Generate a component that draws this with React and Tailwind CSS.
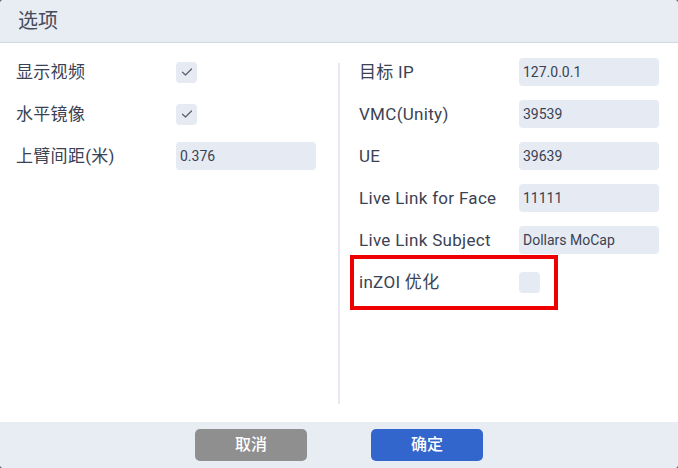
import React from "react";

const font = { fontFamily: 'Roboto, "Noto Sans CJK SC", sans-serif' };

function Check({ checked }) {
  return (
    <div className="w-[21px] h-[21px] rounded-[4px] bg-[#e6ebf3] flex items-center justify-center">
      {checked && (
        <svg width="12" height="10" viewBox="0 0 12 10" fill="none">
          <polyline points="1.5,5.2 4.5,8 10.5,2" stroke="#5b6272" strokeWidth="1.3" strokeLinecap="round" strokeLinejoin="round" />
        </svg>
      )}
    </div>
  );
}

function Input({ value }) {
  return (
    <div className="w-[140px] h-[28px] rounded-[4px] bg-[#e6ebf3] flex items-center pl-[4px] text-[14px] text-[#3a4252]">
      {value}
    </div>
  );
}

function Row({ label, children }) {
  return (
    <div className="h-[42px] flex items-center">
      <div className="w-[160px] pt-[2px] text-[17px] tracking-[0.3px] text-[#3a4253] whitespace-nowrap">{label}</div>
      {children}
    </div>
  );
}

export default function App() {
  return (
    <div className="w-[678px] h-[468px] bg-[#6b6b6b]" style={font}>
      <div className="w-full h-full rounded-[4px] bg-white flex flex-col overflow-hidden">
        <div className="h-[43px] shrink-0 bg-[#e8edf4] border-b border-[#cfd8e3] flex items-center pl-[18px] text-[20px] text-[#454c5a]">
          选项
        </div>
        <div className="flex-1 flex">
          <div className="w-[338px] pl-4 pt-2">
            <Row label="显示视频"><Check checked /></Row>
            <Row label="水平镜像"><Check checked /></Row>
            <Row label="上臂间距(米)"><Input value="0.376" /></Row>
          </div>
          <div className="w-[2px] bg-[#e6eaf0] mt-[20px] mb-[18px]" />
          <div className="flex-1 pl-[19px] pt-2 relative">
            <Row label="目标 IP"><Input value="127.0.0.1" /></Row>
            <Row label="VMC(Unity)"><Input value="39539" /></Row>
            <Row label="UE"><Input value="39639" /></Row>
            <Row label="Live Link for Face"><Input value="11111" /></Row>
            <Row label="Live Link Subject"><Input value="Dollars MoCap" /></Row>
            <Row label="inZOI 优化"><Check /></Row>
            <div className="absolute left-[10px] top-[212px] w-[208px] h-[55px] border-[4px] border-[#ee0000]" />
          </div>
        </div>
        <div className="h-[46px] shrink-0 bg-[#e8edf4] flex items-center justify-center gap-[64px]">
          <div className="w-[112px] h-[32px] rounded-[5px] bg-[#8f8f8f] text-white text-[16px] font-medium flex items-center justify-center">
            取消
          </div>
          <div className="w-[112px] h-[32px] rounded-[5px] bg-[#3366cc] text-white text-[16px] font-medium flex items-center justify-center">
            确定
          </div>
        </div>
      </div>
    </div>
  );
}
